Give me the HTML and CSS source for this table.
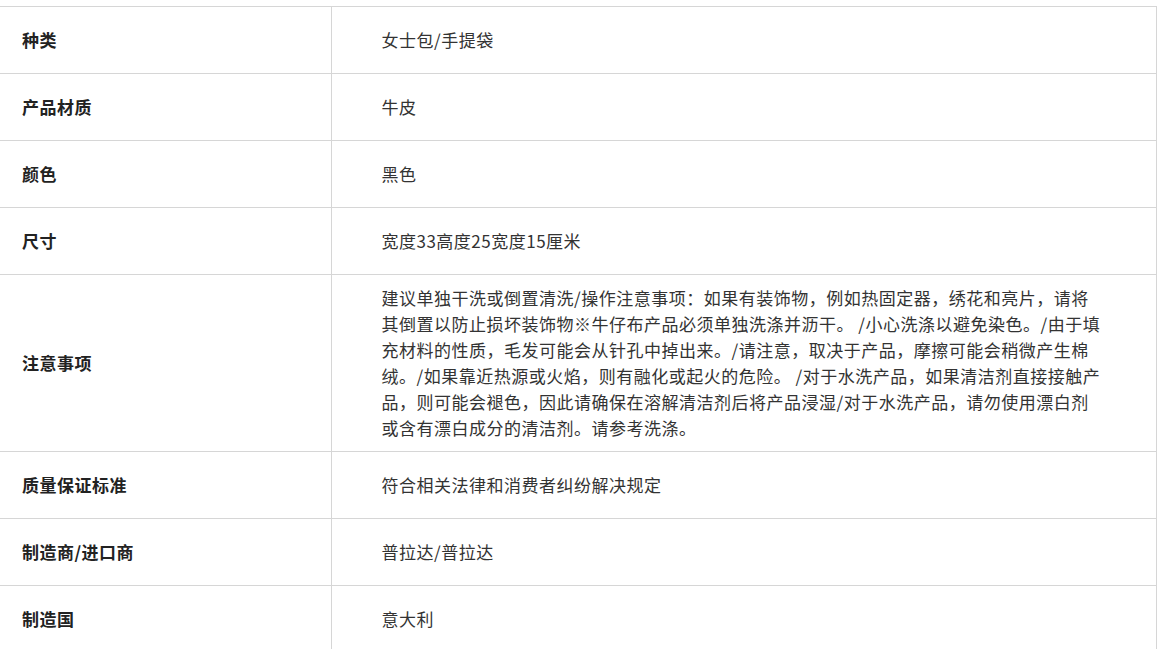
FILE: index.html
```html
<!DOCTYPE html>
<html>
<head>
    <meta charset="utf-8">
    <title>商品信息</title>
    <link rel="stylesheet" href="styles.css">
</head>
<body>
    <table class="spec-table">
        <colgroup>
            <col class="col-label">
            <col class="col-value">
        </colgroup>
        <tbody>
            <tr><th>种类</th><td>女士包/手提袋</td></tr>
            <tr><th>产品材质</th><td>牛皮</td></tr>
            <tr><th>颜色</th><td>黑色</td></tr>
            <tr><th>尺寸</th><td>宽度33高度25宽度15厘米</td></tr>
            <tr>
                <th>注意事项</th>
                <td>建议单独干洗或倒置清洗/操作注意事项：如果有装饰物，例如热固定器，绣花和亮片，请将其倒置以防止损坏装饰物※牛仔布产品必须单独洗涤并沥干。 /小心洗涤以避免染色。/由于填充材料的性质，毛发可能会从针孔中掉出来。/请注意，取决于产品，摩擦可能会稍微产生棉绒。/如果靠近热源或火焰，则有融化或起火的危险。 /对于水洗产品，如果清洁剂直接接触产品，则可能会褪色，因此请确保在溶解清洁剂后将产品浸湿/对于水洗产品，请勿使用漂白剂或含有漂白成分的清洁剂。请参考洗涤。</td>
            </tr>
            <tr><th>质量保证标准</th><td>符合相关法律和消费者纠纷解决规定</td></tr>
            <tr><th>制造商/进口商</th><td>普拉达/普拉达</td></tr>
            <tr><th>制造国</th><td>意大利</td></tr>
        </tbody>
    </table>
</body>
</html>
```

FILE: styles.css
```css
body { margin: 0; padding-top: 6px; background: #fff; font-family: "Noto Sans CJK SC", "Noto Sans", sans-serif; }
.spec-table { width: 1157px; border-collapse: collapse; table-layout: fixed; font-size: 17px; letter-spacing: 0.5px; line-height: 26px; }
.col-label { width: 331px; }
.spec-table th, .spec-table td { height: 46px; padding: 10px 0 10px 22px; border: 1px solid #d6d6d6; vertical-align: middle; text-align: left; }
.spec-table th { border-left: none; font-weight: bold; color: #222; }
.spec-table td { padding-left: 50px; padding-right: 52px; font-weight: normal; color: #333; }
```
